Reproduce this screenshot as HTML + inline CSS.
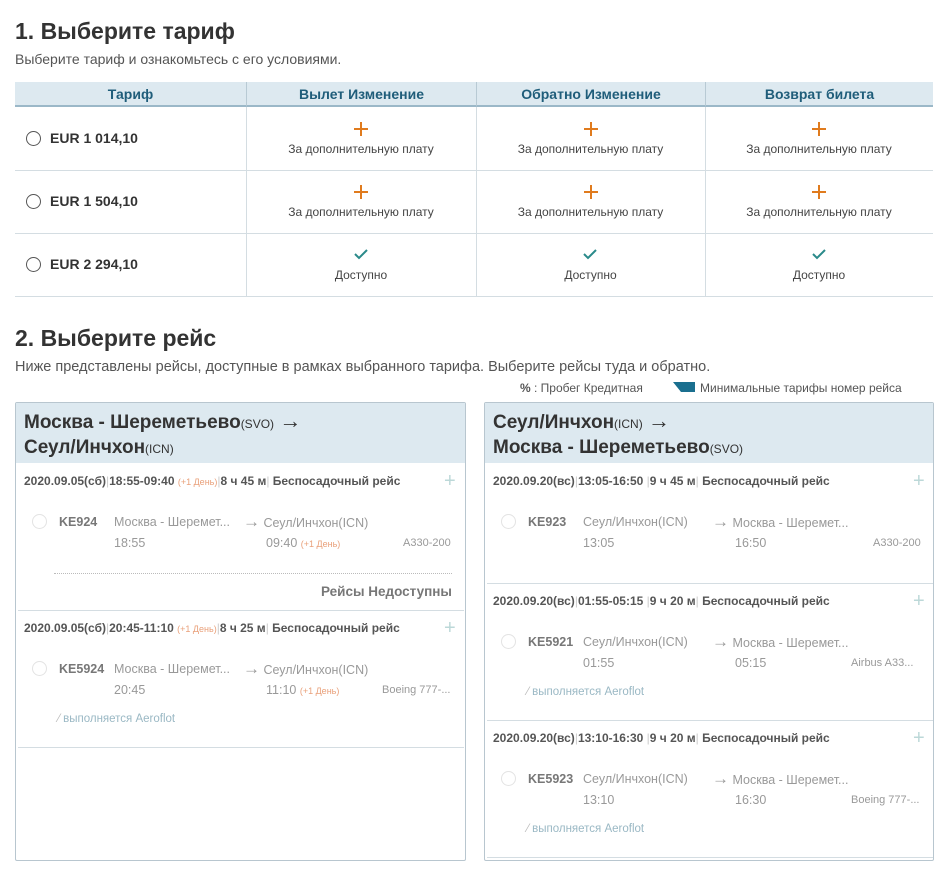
<!DOCTYPE html>
<html><head><meta charset="utf-8"><style>
*{margin:0;padding:0;box-sizing:border-box}
body{width:945px;height:874px;background:#fff;font-family:"Liberation Sans",sans-serif;color:#333;position:relative;overflow:hidden}
.a{position:absolute;white-space:nowrap;line-height:16px}
h1{position:absolute;font-size:23px;font-weight:bold;color:#333;line-height:30px}
.th{position:absolute;top:82px;height:25px;background:#dde9f0;border-bottom:2px solid #9bb8c8;color:#1f5d7a;font-weight:bold;font-size:14px;text-align:center;line-height:25px}
.cell{position:absolute;text-align:center;font-size:12px;color:#444}
.vl{position:absolute;width:1px;background:#d4dde2}
.hl{position:absolute;height:1px;background:#d4dde2}
.rad{position:absolute;width:15px;height:15px;border:1px solid #555;border-radius:50%}
.price{position:absolute;font-weight:bold;font-size:14px;color:#333;line-height:16px}
.pl{position:absolute;left:50%;margin-left:-8px;top:0}
.panel{position:absolute;top:402px;height:459px;border:1px solid #b8c6cf;border-radius:2px;background:#fff}
.ph{position:absolute;left:0;top:0;right:0;height:60px;background:#dde9f0;padding:6px 8px;font-weight:bold;font-size:19px;line-height:24px;color:#333}
.ph small{font-size:12px;font-weight:normal}
.ph span{font-weight:normal;font-size:22px}
.gh{font-size:12px;font-weight:bold;color:#555}
.gh i{font-style:normal;color:#ccc;font-weight:normal}
.gh em{font-style:normal;color:#e9a07a;font-size:9px;font-weight:normal}
.gp{position:absolute;font-size:20px;color:#bcd8d8;line-height:16px}
.sm{font-size:12.5px;color:#999}
.ar{font-size:17px}
.fn{font-size:12.5px;font-weight:bold;color:#777}
.rc{position:absolute;width:15px;height:15px;border:1px solid #e3e3e3;border-radius:50%}
.af{font-size:11.5px;color:#9ab8c4}
.af b{color:#bbb;font-weight:normal}
</style></head><body>
<h1 style="left:15px;top:16px">1. Выберите тариф</h1>
<div class="a" style="left:15px;top:51px;font-size:14px;color:#555">Выберите тариф и ознакомьтесь с его условиями.</div>

<div class="th" style="left:15px;width:231px">Тариф</div>
<div class="th" style="left:246px;width:230px;border-left:1px solid #b8cad4">Вылет Изменение</div>
<div class="th" style="left:476px;width:229px;border-left:1px solid #b8cad4">Обратно Изменение</div>
<div class="th" style="left:705px;width:228px;border-left:1px solid #b8cad4">Возврат билета</div>
<div class="vl" style="left:246px;top:107px;height:189px"></div>
<div class="vl" style="left:476px;top:107px;height:189px"></div>
<div class="vl" style="left:705px;top:107px;height:189px"></div>
<div class="hl" style="left:15px;width:918px;top:170px"></div>
<div class="hl" style="left:15px;width:918px;top:233px"></div>
<div class="hl" style="left:15px;width:918px;top:296px"></div>

<div class="rad" style="left:26px;top:131px"></div><div class="price" style="left:50px;top:130px">EUR 1 014,10</div>
<div class="rad" style="left:26px;top:194px"></div><div class="price" style="left:50px;top:193px">EUR 1 504,10</div>
<div class="rad" style="left:26px;top:257px"></div><div class="price" style="left:50px;top:256px">EUR 2 294,10</div>

<div class="cell" style="left:246px;width:230px;top:121px;height:40px"><svg class="pl" width="16" height="16"><path d="M8 1v14M1 8h14" stroke="#e07b1e" stroke-width="2"/></svg><div class="a" style="left:0;width:100%;top:20px">За дополнительную плату</div></div>
<div class="cell" style="left:476px;width:229px;top:121px;height:40px"><svg class="pl" width="16" height="16"><path d="M8 1v14M1 8h14" stroke="#e07b1e" stroke-width="2"/></svg><div class="a" style="left:0;width:100%;top:20px">За дополнительную плату</div></div>
<div class="cell" style="left:705px;width:228px;top:121px;height:40px"><svg class="pl" width="16" height="16"><path d="M8 1v14M1 8h14" stroke="#e07b1e" stroke-width="2"/></svg><div class="a" style="left:0;width:100%;top:20px">За дополнительную плату</div></div>
<div class="cell" style="left:246px;width:230px;top:184px;height:40px"><svg class="pl" width="16" height="16"><path d="M8 1v14M1 8h14" stroke="#e07b1e" stroke-width="2"/></svg><div class="a" style="left:0;width:100%;top:20px">За дополнительную плату</div></div>
<div class="cell" style="left:476px;width:229px;top:184px;height:40px"><svg class="pl" width="16" height="16"><path d="M8 1v14M1 8h14" stroke="#e07b1e" stroke-width="2"/></svg><div class="a" style="left:0;width:100%;top:20px">За дополнительную плату</div></div>
<div class="cell" style="left:705px;width:228px;top:184px;height:40px"><svg class="pl" width="16" height="16"><path d="M8 1v14M1 8h14" stroke="#e07b1e" stroke-width="2"/></svg><div class="a" style="left:0;width:100%;top:20px">За дополнительную плату</div></div>
<div class="cell" style="left:246px;width:230px;top:248px;height:40px"><svg style="position:absolute;left:107px;top:0" width="16" height="12"><path d="M2 6l4 4 8-8" stroke="#2a8a8a" stroke-width="2" fill="none"/></svg><div class="a" style="left:0;width:100%;top:19px">Доступно</div></div>
<div class="cell" style="left:476px;width:229px;top:248px;height:40px"><svg style="position:absolute;left:106px;top:0" width="16" height="12"><path d="M2 6l4 4 8-8" stroke="#2a8a8a" stroke-width="2" fill="none"/></svg><div class="a" style="left:0;width:100%;top:19px">Доступно</div></div>
<div class="cell" style="left:705px;width:228px;top:248px;height:40px"><svg style="position:absolute;left:106px;top:0" width="16" height="12"><path d="M2 6l4 4 8-8" stroke="#2a8a8a" stroke-width="2" fill="none"/></svg><div class="a" style="left:0;width:100%;top:19px">Доступно</div></div>

<h1 style="left:15px;top:323px">2. Выберите рейс</h1>
<div class="a" style="left:15px;top:359px;font-size:14.5px;color:#555">Ниже представлены рейсы, доступные в рамках выбранного тарифа. Выберите рейсы туда и обратно.</div>
<div class="a" style="left:520px;top:380px;font-size:12px;color:#555"><b>%</b> : Пробег Кредитная</div>
<svg style="position:absolute;left:673px;top:382px" width="22" height="10"><path d="M0 0H22V10H8Z" fill="#1a6f8f"/></svg>
<div class="a" style="left:700px;top:380px;font-size:12px;color:#555">Минимальные тарифы номер рейса</div>

<div class="panel" style="left:15px;width:451px">
 <div class="ph">Москва - Шереметьево<small>(SVO)</small> <span>→</span><br>Сеул/Инчхон<small>(ICN)</small></div>
 <div class="a gh" style="left:8px;top:70px">2020.09.05(сб)<i>|</i>18:55-09:40 <em>(+1 День)</em><i>|</i>8 ч 45 м<i>|</i> Беспосадочный рейс</div>
 <div class="gp" style="left:428px;top:70px">+</div>
 <div class="rc" style="left:16px;top:111px"></div>
 <div class="a fn" style="left:43px;top:111px">KE924</div>
 <div class="a sm" style="left:98px;top:111px">Москва - Шеремет...</div>
 <div class="a sm" style="left:98px;top:132px">18:55</div>
 <div class="a sm" style="left:227px;top:111px"><span class="ar">→</span> Сеул/Инчхон(ICN)</div>
 <div class="a sm" style="left:250px;top:132px">09:40 <span style="color:#e9a07a;font-size:9px">(+1 День)</span></div>
 <div class="a sm" style="left:387px;top:132px;font-size:11px">A330-200</div>
 <div style="position:absolute;left:38px;width:398px;top:170px;border-top:1px dotted #bbb"></div>
 <div class="a" style="left:305px;top:181px;font-size:13.5px;font-weight:bold;color:#777">Рейсы Недоступны</div>
 <div class="hl" style="left:2px;width:446px;top:207px"></div>
 <div class="a gh" style="left:8px;top:217px">2020.09.05(сб)<i>|</i>20:45-11:10 <em>(+1 День)</em><i>|</i>8 ч 25 м<i>|</i> Беспосадочный рейс</div>
 <div class="gp" style="left:428px;top:217px">+</div>
 <div class="rc" style="left:16px;top:258px"></div>
 <div class="a fn" style="left:43px;top:258px">KE5924</div>
 <div class="a sm" style="left:98px;top:258px">Москва - Шеремет...</div>
 <div class="a sm" style="left:98px;top:279px">20:45</div>
 <div class="a sm" style="left:227px;top:258px"><span class="ar">→</span> Сеул/Инчхон(ICN)</div>
 <div class="a sm" style="left:250px;top:279px">11:10 <span style="color:#e9a07a;font-size:9px">(+1 День)</span></div>
 <div class="a sm" style="left:366px;top:279px;font-size:11px">Boeing 777-...</div>
 <div class="a af" style="left:42px;top:308px"><b>⁄</b> выполняется Aeroflot</div>
 <div class="hl" style="left:2px;width:446px;top:344px"></div>
</div>

<div class="panel" style="left:484px;width:450px">
 <div class="ph">Сеул/Инчхон<small>(ICN)</small> <span>→</span><br>Москва - Шереметьево<small>(SVO)</small></div>
 <div class="a gh" style="left:8px;top:70px">2020.09.20(вс)<i>|</i>13:05-16:50 <i>|</i>9 ч 45 м<i>|</i> Беспосадочный рейс</div>
 <div class="gp" style="left:428px;top:70px">+</div>
 <div class="rc" style="left:16px;top:111px"></div>
 <div class="a fn" style="left:43px;top:111px">KE923</div>
 <div class="a sm" style="left:98px;top:111px">Сеул/Инчхон(ICN)</div>
 <div class="a sm" style="left:98px;top:132px">13:05</div>
 <div class="a sm" style="left:227px;top:111px"><span class="ar">→</span> Москва - Шеремет...</div>
 <div class="a sm" style="left:250px;top:132px">16:50</div>
 <div class="a sm" style="left:388px;top:132px;font-size:11px">A330-200</div>
 <div class="hl" style="left:2px;width:446px;top:180px"></div>
 <div class="a gh" style="left:8px;top:190px">2020.09.20(вс)<i>|</i>01:55-05:15 <i>|</i>9 ч 20 м<i>|</i> Беспосадочный рейс</div>
 <div class="gp" style="left:428px;top:190px">+</div>
 <div class="rc" style="left:16px;top:231px"></div>
 <div class="a fn" style="left:43px;top:231px">KE5921</div>
 <div class="a sm" style="left:98px;top:231px">Сеул/Инчхон(ICN)</div>
 <div class="a sm" style="left:98px;top:252px">01:55</div>
 <div class="a sm" style="left:227px;top:231px"><span class="ar">→</span> Москва - Шеремет...</div>
 <div class="a sm" style="left:250px;top:252px">05:15</div>
 <div class="a sm" style="left:366px;top:252px;font-size:11px">Airbus A33...</div>
 <div class="a af" style="left:42px;top:281px"><b>⁄</b> выполняется Aeroflot</div>
 <div class="hl" style="left:2px;width:446px;top:317px"></div>
 <div class="a gh" style="left:8px;top:327px">2020.09.20(вс)<i>|</i>13:10-16:30 <i>|</i>9 ч 20 м<i>|</i> Беспосадочный рейс</div>
 <div class="gp" style="left:428px;top:327px">+</div>
 <div class="rc" style="left:16px;top:368px"></div>
 <div class="a fn" style="left:43px;top:368px">KE5923</div>
 <div class="a sm" style="left:98px;top:368px">Сеул/Инчхон(ICN)</div>
 <div class="a sm" style="left:98px;top:389px">13:10</div>
 <div class="a sm" style="left:227px;top:368px"><span class="ar">→</span> Москва - Шеремет...</div>
 <div class="a sm" style="left:250px;top:389px">16:30</div>
 <div class="a sm" style="left:366px;top:389px;font-size:11px">Boeing 777-...</div>
 <div class="a af" style="left:42px;top:418px"><b>⁄</b> выполняется Aeroflot</div>
 <div class="hl" style="left:2px;width:446px;top:454px"></div>
</div>
</body></html>
